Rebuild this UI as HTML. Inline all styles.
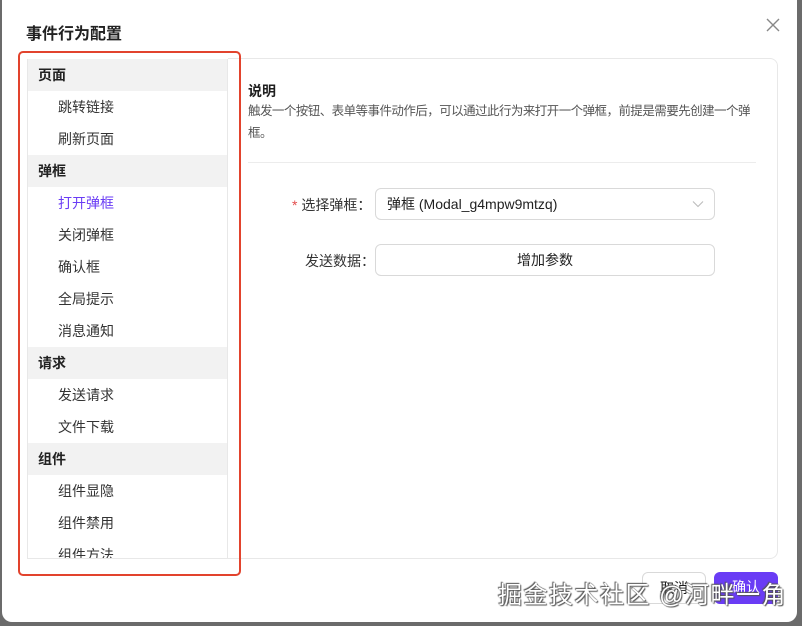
<!DOCTYPE html>
<html><head><meta charset="utf-8"><style>
*{box-sizing:border-box;margin:0;padding:0}
body{width:802px;height:626px;background:#6b6b6b;position:relative;overflow:hidden;font-family:"Liberation Sans","Noto Sans CJK SC",sans-serif;color:#1f1f1f}
.modal{position:absolute;left:2px;top:-10px;width:795px;height:632px;background:#fff;border-radius:10px}
.title{position:absolute;left:26px;top:20px;font-size:16px;font-weight:bold;color:#222}
.close{position:absolute;left:765px;top:17px}
.list{position:absolute;left:27px;top:59px;width:201px;height:500px;border-left:1px solid #e8e8e8;border-right:1px solid #e8e8e8;border-bottom:1px solid #e8e8e8;overflow:hidden}
.row{height:32px;line-height:32px;font-size:14px}
.h{background:#f2f2f2;padding-left:10px;font-weight:bold;color:#222}
.i{padding-left:30px;color:#333}
.act{color:#6a3cf5}
.red{position:absolute;left:18px;top:51px;width:223px;height:525px;border:2px solid #e2432d;border-radius:5px}
.panel{position:absolute;left:228px;top:58px;width:550px;height:501px;border:1px solid #e8e8e8;border-left:none;border-radius:0 8px 8px 0}
.sm{position:absolute;left:248px;top:81px;font-size:14px;font-weight:bold}
.desc{position:absolute;left:248px;top:100px;font-size:12.5px;letter-spacing:-0.55px;line-height:22px;color:#555;white-space:nowrap}
.hr{position:absolute;left:248px;top:162px;width:508px;height:1px;background:#ececec}
.lab{position:absolute;font-size:14px;color:#333}
.box{position:absolute;left:375px;width:340px;height:32px;border:1px solid #d9d9d9;border-radius:6px;font-size:14px;line-height:30px}
.btn{position:absolute;top:572px;height:32px;width:64px;border-radius:6px;font-size:14px;text-align:center;line-height:30px}
.wm{position:absolute;left:498px;top:575px;font-size:24px;letter-spacing:1.5px;color:#fff;text-shadow:0 0 1px #555,1px 1px 1px #555,-1px -1px 1px #555;white-space:nowrap}
</style></head><body>
<div class="modal"></div>
<div class="title">事件行为配置</div>
<svg class="close" width="16" height="16" viewBox="0 0 16 16"><path d="M2 2L14 14M14 2L2 14" stroke="#888" stroke-width="1.4"/></svg>
<div class="panel"></div>
<div class="list">
<div class="row h">页面</div>
<div class="row i">跳转链接</div>
<div class="row i">刷新页面</div>
<div class="row h">弹框</div>
<div class="row i act">打开弹框</div>
<div class="row i">关闭弹框</div>
<div class="row i">确认框</div>
<div class="row i">全局提示</div>
<div class="row i">消息通知</div>
<div class="row h">请求</div>
<div class="row i">发送请求</div>
<div class="row i">文件下载</div>
<div class="row h">组件</div>
<div class="row i">组件显隐</div>
<div class="row i">组件禁用</div>
<div class="row i">组件方法</div>
</div>
<div class="red"></div>
<div class="sm">说明</div>
<div class="desc">触发一个按钮、表单等事件动作后，可以通过此行为来打开一个弹框，前提是需要先创建一个弹<br>框。</div>
<div class="hr"></div>
<div class="lab" style="left:292px;top:195px"><span style="color:#e34d4d">*</span> 选择弹框：</div>
<div class="box" style="top:188px;padding-left:11px">弹框 (Modal_g4mpw9mtzq)
<svg style="position:absolute;right:10px;top:11px" width="12" height="8" viewBox="0 0 12 8"><path d="M1 1.5L6 6.5L11 1.5" fill="none" stroke="#bbb" stroke-width="1.1"/></svg></div>
<div class="lab" style="left:305px;top:251px">发送数据：</div>
<div class="box" style="top:244px;text-align:center">增加参数</div>
<div class="btn" style="left:642px;border:1px solid #d9d9d9;background:#fff">取消</div>
<div class="btn" style="left:714px;background:#6a3cf5;color:#fff">确认</div>
<div class="wm">掘金技术社区 @河畔一角</div>
</body></html>
